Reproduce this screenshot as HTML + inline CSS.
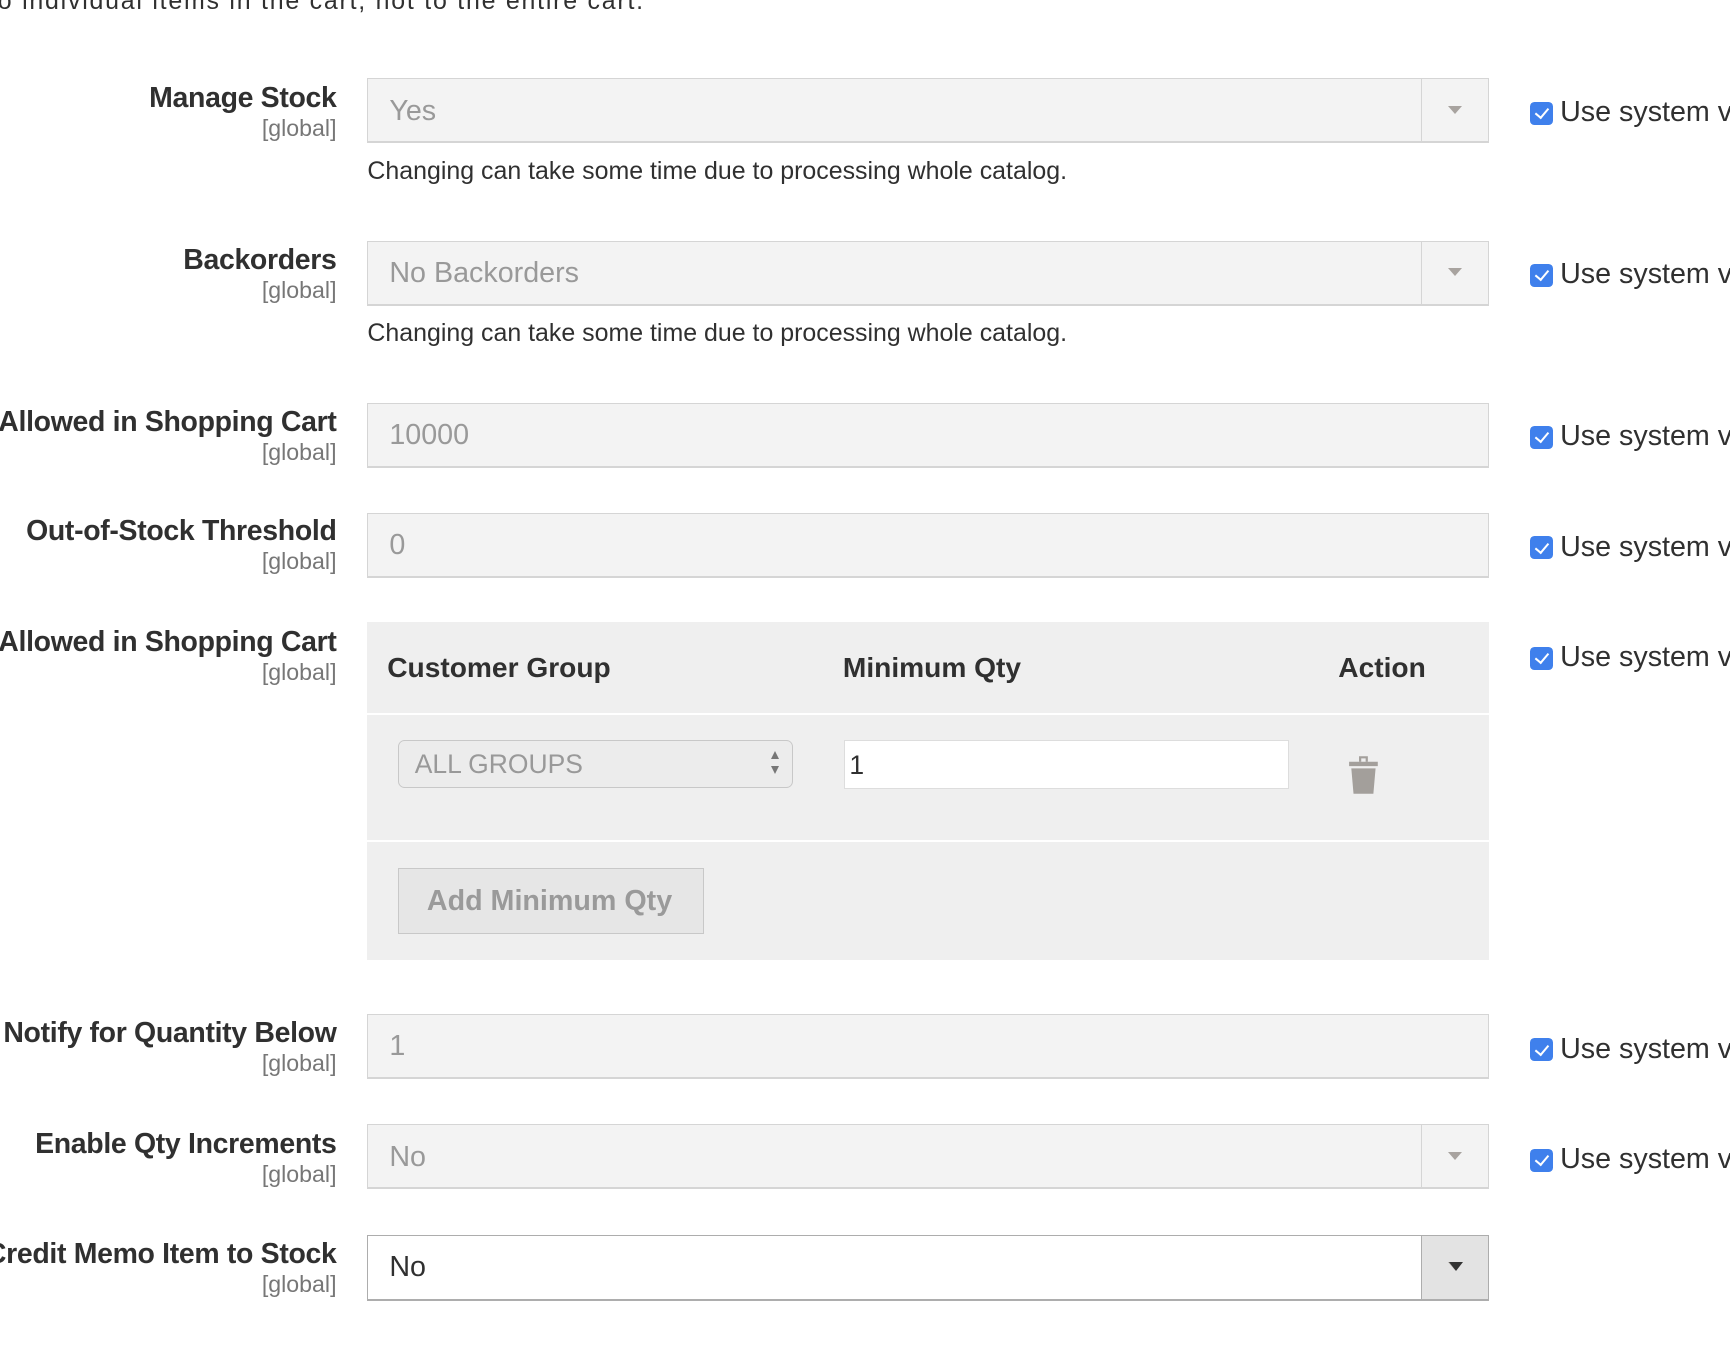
<!DOCTYPE html>
<html><head><style>
html,body{margin:0;padding:0;background:#fff;overflow:hidden;width:1730px;height:1358px}
#w{zoom:1.1033;position:relative;width:1568px;height:1231px;overflow:hidden;font-family:"Liberation Sans",sans-serif;color:#303030}
.a{position:absolute}
.lbl{position:absolute;right:1263px;text-align:right;white-space:nowrap}
.lbl b{display:block;font-size:25.8px;font-weight:bold;color:#303030;letter-spacing:-0.3px}
.lbl span{display:block;font-size:21px;color:#777;margin-top:0px}
.inp{position:absolute;left:333px;width:1017px;height:57px;background:#f3f3f3;border:1px solid #d5d5d5;border-bottom-width:2px;box-sizing:border-box}
.inp .t{position:absolute;left:19px;top:14px;font-size:26px;color:#999}
.inp .ar{position:absolute;right:0;top:0;width:60px;height:100%;border-left:1px solid #d5d5d5}
.inp .ar:after{content:"";position:absolute;left:23px;top:24px;border:7px solid transparent;border-top:8px solid #a8a39f;border-bottom:0}
.note{position:absolute;left:333px;font-size:22.6px;color:#303030}
.cb{position:absolute;left:1387px;width:21px;height:21px;background:#3f80ec;border-radius:4px}
.cb:after{content:"";position:absolute;left:7px;top:3px;width:5px;height:10px;border:solid #fff;border-width:0 2px 2px 0;transform:rotate(40deg)}
.us{position:absolute;left:1414px;font-size:26px;color:#303030;white-space:nowrap}
</style></head><body><div id="w">
<div class="a" style="left:-2px;top:-12px;font-size:22.6px;letter-spacing:1.6px;color:#303030;white-space:nowrap">o individual items in the cart, not to the entire cart.</div>

<div class="lbl" style="top:74px"><b>Manage Stock</b><span>[global]</span></div>
<div class="inp" style="top:71px;height:59px"><div class="t">Yes</div><div class="ar"></div></div>
<div class="note" style="top:142px">Changing can take some time due to processing whole catalog.</div>
<div class="cb" style="top:92px"></div><div class="us" style="top:87px">Use system v</div>

<div class="lbl" style="top:221px"><b>Backorders</b><span>[global]</span></div>
<div class="inp" style="top:218px;height:59px"><div class="t">No Backorders</div><div class="ar"></div></div>
<div class="note" style="top:289px">Changing can take some time due to processing whole catalog.</div>
<div class="cb" style="top:239px"></div><div class="us" style="top:234px">Use system v</div>

<div class="lbl" style="top:368px"><b>Allowed in Shopping Cart</b><span>[global]</span></div>
<div class="inp" style="top:365px;height:59px"><div class="t">10000</div></div>
<div class="cb" style="top:386px"></div><div class="us" style="top:381px">Use system v</div>

<div class="lbl" style="top:467px"><b>Out-of-Stock Threshold</b><span>[global]</span></div>
<div class="inp" style="top:465px;height:59px"><div class="t">0</div></div>
<div class="cb" style="top:486px"></div><div class="us" style="top:481px">Use system v</div>

<div class="lbl" style="top:567px"><b>Allowed in Shopping Cart</b><span>[global]</span></div>
<div class="cb" style="top:586px"></div><div class="us" style="top:581px">Use system v</div>
<div class="a" style="left:333px;top:564px;width:1017px;height:306px;background:#efefef">
  <div class="a" style="left:0;top:82px;width:100%;height:2px;background:#fff"></div>
  <div class="a" style="left:0;top:197px;width:100%;height:2px;background:#fff"></div>
  <div class="a" style="left:18px;top:27px;font-size:25.5px;font-weight:bold;color:#303030">Customer Group</div>
  <div class="a" style="left:431px;top:27px;font-size:25.5px;font-weight:bold;color:#303030">Minimum Qty</div>
  <div class="a" style="left:880px;top:27px;font-size:25.5px;font-weight:bold;color:#303030">Action</div>
  <div class="a" style="left:28px;top:107px;width:358px;height:43px;border:1px solid #c8c8c8;border-radius:6px;background:#ececec;box-sizing:border-box">
    <div class="a" style="left:14px;top:7px;font-size:24px;color:#999">ALL GROUPS</div>
    <div class="a" style="left:337px;top:9px;border:4px solid transparent;border-bottom:8px solid #777;border-top:0"></div>
    <div class="a" style="left:337px;top:22px;border:4px solid transparent;border-top:8px solid #777;border-bottom:0"></div>
  </div>
  <div class="a" style="left:432px;top:107px;width:403px;height:44px;background:#fff;border:1px solid #ddd;box-sizing:border-box">
    <div class="a" style="left:4px;top:8px;font-size:24px;color:#303030">1</div>
  </div>
  <svg class="a" style="left:889px;top:119px" width="28" height="38" viewBox="0 0 28 38">
    <path d="M10 2h8v5h-2V4h-4v3h-2z" fill="#a39f9b"/>
    <path d="M1 7h26v4H1z" fill="#a39f9b"/>
    <path d="M3 13h22l-2 23H5z" fill="#a39f9b"/>
  </svg>
  <div class="a" style="left:28px;top:223px;width:277px;height:60px;background:#e6e6e6;border:1px solid #c8c8c8;box-sizing:border-box">
    <div class="a" style="left:25px;top:14px;font-size:26px;font-weight:bold;color:#9a9a9a;white-space:nowrap">Add Minimum Qty</div>
  </div>
</div>

<div class="lbl" style="top:922px"><b>Notify for Quantity Below</b><span>[global]</span></div>
<div class="inp" style="top:919px;height:59px"><div class="t">1</div></div>
<div class="cb" style="top:941px"></div><div class="us" style="top:936px">Use system v</div>

<div class="lbl" style="top:1022px"><b>Enable Qty Increments</b><span>[global]</span></div>
<div class="inp" style="top:1019px;height:59px"><div class="t">No</div><div class="ar"></div></div>
<div class="cb" style="top:1041px"></div><div class="us" style="top:1036px">Use system v</div>

<div class="lbl" style="top:1122px"><b>Return Credit Memo Item to Stock</b><span>[global]</span></div>
<div class="inp" style="top:1119px;height:60px;background:#fff;border-color:#adadad"><div class="t" style="color:#303030">No</div><div class="ar" style="background:#e3e3e3;border-left-color:#adadad"></div></div>
<div class="a" style="left:1313px;top:1144px;border:7px solid transparent;border-top:9px solid #333;border-bottom:0"></div>
</div></body></html>
